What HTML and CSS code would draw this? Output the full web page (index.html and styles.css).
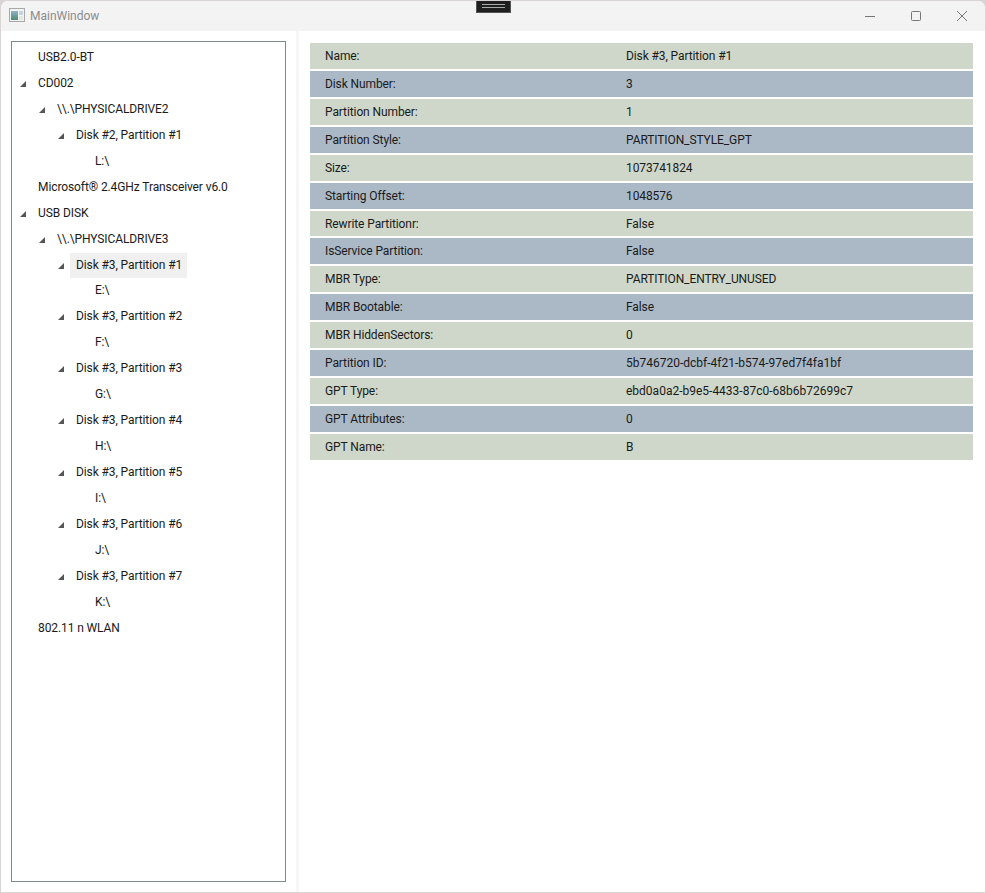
FILE: index.html
```html
<!DOCTYPE html>
<html lang="en">
<head>
  <meta charset="UTF-8">
  <meta name="viewport" content="width=device-width, initial-scale=1.0">
  <title>MainWindow</title>
  <link rel="stylesheet" href="styles.css">
</head>
<body>
  <div class="window">
    <div class="snap-handle"><span></span><span></span></div>
    <header class="titlebar">
      <svg class="app-icon" width="16" height="14" viewBox="0 0 16 14">
        <defs>
          <linearGradient id="icon-fill" x1="0" y1="0" x2="0" y2="1">
            <stop offset="0" stop-color="#8fb4c8"/>
            <stop offset="1" stop-color="#4f8a70"/>
          </linearGradient>
        </defs>
        <rect x="0.5" y="0.5" width="15" height="13" fill="#f2f2f2" stroke="#a8a8a8"/>
        <rect x="2" y="3" width="7" height="9" fill="url(#icon-fill)"/>
        <rect x="10" y="3" width="4" height="4" fill="#c3d6e0"/>
        <rect x="10" y="8" width="4" height="4" fill="#e2e8e4"/>
      </svg>
      <span class="title">MainWindow</span>
      <div class="controls">
        <svg width="46" height="30" viewBox="0 0 46 30"><path d="M18 15.5h10" stroke="#777" fill="none"/></svg>
        <svg width="46" height="30" viewBox="0 0 46 30"><rect x="18.5" y="10.5" width="9" height="9" rx="1" stroke="#777" fill="none"/></svg>
        <svg width="46" height="30" viewBox="0 0 46 30"><path d="M18 10l10 10M28 10l-10 10" stroke="#777" fill="none"/></svg>
      </div>
    </header>

    <main class="content">
      <nav class="tree">
        <ul>
          <li><div class="node">USB2.0-BT</div></li>
          <li><div class="node open">CD002</div>
            <ul>
              <li><div class="node open">\\.\PHYSICALDRIVE2</div>
                <ul>
                  <li><div class="node open">Disk #2, Partition #1</div>
                    <ul><li><div class="node">L:\</div></li></ul>
                  </li>
                </ul>
              </li>
            </ul>
          </li>
          <li><div class="node">Microsoft® 2.4GHz Transceiver v6.0</div></li>
          <li><div class="node open">USB DISK</div>
            <ul>
              <li><div class="node open">\\.\PHYSICALDRIVE3</div>
                <ul>
                  <li><div class="node open selected">Disk #3, Partition #1</div>
                    <ul><li><div class="node">E:\</div></li></ul>
                  </li>
                  <li><div class="node open">Disk #3, Partition #2</div>
                    <ul><li><div class="node">F:\</div></li></ul>
                  </li>
                  <li><div class="node open">Disk #3, Partition #3</div>
                    <ul><li><div class="node">G:\</div></li></ul>
                  </li>
                  <li><div class="node open">Disk #3, Partition #4</div>
                    <ul><li><div class="node">H:\</div></li></ul>
                  </li>
                  <li><div class="node open">Disk #3, Partition #5</div>
                    <ul><li><div class="node">I:\</div></li></ul>
                  </li>
                  <li><div class="node open">Disk #3, Partition #6</div>
                    <ul><li><div class="node">J:\</div></li></ul>
                  </li>
                  <li><div class="node open">Disk #3, Partition #7</div>
                    <ul><li><div class="node">K:\</div></li></ul>
                  </li>
                </ul>
              </li>
            </ul>
          </li>
          <li><div class="node">802.11 n WLAN</div></li>
        </ul>
      </nav>

      <div class="splitter"></div>

      <section class="details">
        <div class="row green"><span>Name:</span><span>Disk #3, Partition #1</span></div>
        <div class="row blue"><span>Disk Number:</span><span>3</span></div>
        <div class="row green"><span>Partition Number:</span><span>1</span></div>
        <div class="row blue"><span>Partition Style:</span><span>PARTITION_STYLE_GPT</span></div>
        <div class="row green"><span>Size:</span><span>1073741824</span></div>
        <div class="row blue"><span>Starting Offset:</span><span>1048576</span></div>
        <div class="row green"><span>Rewrite Partitionr:</span><span>False</span></div>
        <div class="row blue"><span>IsService Partition:</span><span>False</span></div>
        <div class="row green"><span>MBR Type:</span><span>PARTITION_ENTRY_UNUSED</span></div>
        <div class="row blue"><span>MBR Bootable:</span><span>False</span></div>
        <div class="row green"><span>MBR HiddenSectors:</span><span>0</span></div>
        <div class="row blue"><span>Partition ID:</span><span class="guid">5b746720-dcbf-4f21-b574-97ed7f4fa1bf</span></div>
        <div class="row green"><span>GPT Type:</span><span class="guid">ebd0a0a2-b9e5-4433-87c0-68b6b72699c7</span></div>
        <div class="row blue"><span>GPT Attributes:</span><span>0</span></div>
        <div class="row green"><span>GPT Name:</span><span>B</span></div>
      </section>
    </main>
  </div>
</body>
</html>
```

FILE: styles.css
```css
html, body {
  margin: 0;
  padding: 0;
  height: 100%;
  overflow: hidden;
}

body {
  font-family: Roboto, "Open Sans", Arial, sans-serif;
  font-size: 12px;
  letter-spacing: -0.1px;
  color: #1a1a1a;
  background-color: #d8d4d4;
}

ul {
  list-style: none;
  margin: 0;
  padding: 0;
}

.window {
  position: relative;
  display: flex;
  flex-direction: column;
  box-sizing: border-box;
  height: 891px;
  margin-top: 1px;
  margin-left: 1px;
  margin-right: 1px;
  background-color: #ffffff;
  border-radius: 7px 7px 0 0;
  overflow: hidden;
}

.snap-handle {
  position: absolute;
  top: -1px;
  left: 475px;
  width: 35px;
  height: 13px;
  box-sizing: border-box;
  padding-top: 4px;
  background-color: #1f1f1f;
  border: 1px solid #555;
  border-top: none;
}

.snap-handle span {
  display: block;
  height: 1px;
  margin: 0 5px 2px;
  background-color: #aaa;
}

.titlebar {
  display: flex;
  align-items: center;
  flex: none;
  height: 30px;
  padding-left: 8px;
  background-color: #f3f3f3;
}

.app-icon {
  margin-right: 5px;
  margin-bottom: 3px;
}

.title {
  color: #8c8c8c;
  font-size: 12px;
  letter-spacing: 0;
}

.controls {
  display: flex;
  margin-left: auto;
}

.content {
  display: flex;
  flex: 1;
  min-height: 0;
  padding-top: 10px;
  padding-bottom: 10px;
}

.tree {
  flex: none;
  box-sizing: border-box;
  width: 275px;
  margin-left: 10px;
  padding-top: 3px;
  border: 1px solid #82878c;
  overflow: hidden;
}

.tree ul ul {
  padding-left: 19px;
}

.node {
  position: relative;
  width: max-content;
  height: 25.95px;
  line-height: 25.95px;
  margin-left: 26px;
  padding: 0 5px 0 0;
  white-space: nowrap;
}

.node.open::before {
  content: "";
  position: absolute;
  left: -18px;
  top: 10px;
  width: 0;
  height: 0;
  border-style: solid;
  border-width: 0 0 6px 6px;
  border-color: transparent transparent #555555 transparent;
}

.node.selected {
  margin-left: 20px;
  padding: 0 5px 0 6px;
  background-color: #f0f0f0;
}

.node.selected::before {
  left: -12px;
}

.splitter {
  flex: none;
  width: 3px;
  margin: -10px 0 -10px 10px;
  background-color: #f6f6f6;
}

.details {
  flex: 1;
  display: flex;
  flex-direction: column;
  margin-left: 11px;
  margin-right: 12px;
  padding-top: 2px;
}

.row {
  display: grid;
  grid-template-columns: 301px 1fr;
  flex: none;
  box-sizing: border-box;
  height: 25.93px;
  line-height: 27px;
  margin-bottom: 2px;
  padding-left: 15px;
}

.guid {
  letter-spacing: 0;
}

.green {
  background-color: #ced7c9;
}

.blue {
  background-color: #abb9c7;
}
```
